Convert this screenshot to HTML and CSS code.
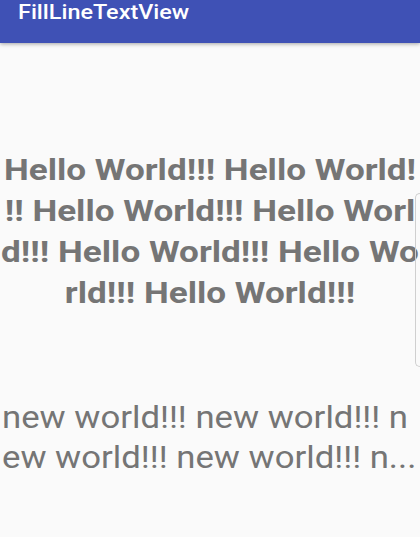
FILE: index.html
```html
<!DOCTYPE html>
<html>
<head>
<meta charset="utf-8">
<link rel="stylesheet" href="styles.css">
</head>
<body>
<div class="appbar"><span class="title">FillLineTextView</span></div>
<main class="content">
  <div class="fill-text">
    <div class="line">Hello World!!! Hello World!</div>
    <div class="line">!! Hello World!!! Hello Worl</div>
    <div class="line">d!!! Hello World!!! Hello Wo</div>
    <div class="line">rld!!! Hello World!!!</div>
  </div>
  <div class="new-text">
    <div class="line">new world!!! new world!!! n</div>
    <div class="line">ew world!!! new world!!! n...</div>
  </div>
</main>
<div class="edge"></div>
</body>
</html>
```
FILE: styles.css
```css
html, body {
  margin: 0;
  padding: 0;
}
body {
  width: 420px;
  height: 537px;
  background: #fafafa;
  font-family: Roboto, "Liberation Sans", sans-serif;
  overflow: hidden;
  position: relative;
}
.appbar {
  height: 43px;
  background: #3f51b5;
  box-shadow: 0 1px 4px rgba(0,0,0,0.35);
  position: relative;
  z-index: 1;
}
.title {
  display: block;
  padding-left: 18px;
  color: #fff;
  font-size: 20px;
  font-weight: 500;
  line-height: 24px;
  transform: scaleX(1.17);
  transform-origin: 18px 0;
}
.content {
  display: flex;
  flex-direction: column;
  overflow: hidden;
}
.fill-text {
  margin-top: 106px;
  color: #757575;
  font-weight: 700;
  font-size: 30px;
  line-height: 41px;
  text-align: center;
  white-space: nowrap;
  transform: scaleX(1.17);
  transform-origin: 210px 0;
}
.new-text {
  margin-top: 85px;
  color: #757575;
  font-size: 31px;
  line-height: 40px;
  white-space: nowrap;
  transform: scaleX(1.12);
  transform-origin: 2px 0;
  padding-left: 2px;
}
.edge {
  position: absolute;
  left: 415px;
  top: 193px;
  width: 4px;
  height: 172px;
  border: 1px solid #cfcfcf;
  border-right: none;
  border-radius: 6px 0 0 6px;
}
```
